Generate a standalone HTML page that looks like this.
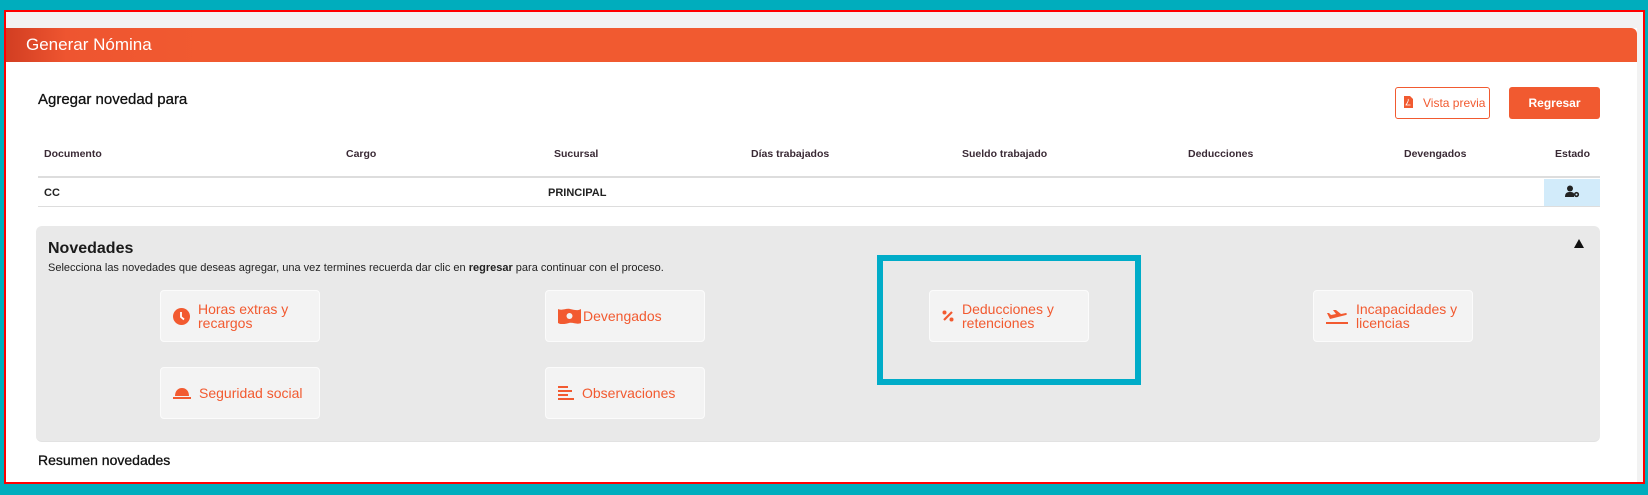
<!DOCTYPE html>
<html><head><meta charset="utf-8"><style>
*{margin:0;padding:0;box-sizing:border-box}
body{width:1648px;height:495px;background:#00adbd;position:relative;overflow:hidden;font-family:"Liberation Sans",sans-serif}
.frame{position:absolute;left:4px;top:10px;width:1641px;height:474px;border:2px solid #ff0000;background:#f2f2f2;overflow:hidden}
.inner{position:absolute;left:0;top:16px;width:1631px;height:460px;background:#fff}
.hdr{position:absolute;left:0;top:0;width:1631px;height:34px;background:linear-gradient(90deg,#d23e22 0,#ee5530 60px,#f15a30 200px,#f15a30);border-top-right-radius:6px;color:#fff;font-size:17px;line-height:34px;padding-left:20px}
.a{position:absolute}
.th{position:absolute;top:148px;font-size:10.5px;font-weight:bold;color:#3a2a35}
.card{position:absolute;width:160px;height:52px;background:#f3f3f3;border:1px solid #fbfbfb;border-radius:4px;color:#f25a30;font-size:14px;line-height:14px;display:flex;align-items:center}
.card svg{flex:none;margin-left:12px;margin-right:8px}
</style></head><body>
<div class="frame"><div class="inner">
<div class="hdr">Generar Nómina</div>
</div></div>
<div class="a" style="left:38px;top:91px;font-size:15px;color:#111;-webkit-text-stroke:0.3px #111">Agregar novedad para</div>
<div class="a" style="left:1395px;top:87px;width:95px;height:32px;border:1px solid #f15a30;border-radius:3px;color:#f15a30;font-size:12px;line-height:30px;padding-left:27px">Vista previa</div>
<svg class="a" style="left:1404px;top:96px" width="9" height="12" viewBox="0 0 9 12"><path d="M0 0h6l3 3v9H0z" fill="#f15a30"/><path d="M2 9c2-3 3-5 2-6M1.5 9h5" stroke="#fff" stroke-width="0.8" fill="none"/></svg>
<div class="a" style="left:1509px;top:87px;width:91px;height:32px;background:#f15a30;border-radius:3px;color:#fff;font-size:12px;font-weight:bold;line-height:32px;text-align:center">Regresar</div>
<div class="th" style="left:44px">Documento</div>
<div class="th" style="left:346px">Cargo</div>
<div class="th" style="left:554px">Sucursal</div>
<div class="th" style="left:751px">Días trabajados</div>
<div class="th" style="left:962px">Sueldo trabajado</div>
<div class="th" style="left:1188px">Deducciones</div>
<div class="th" style="left:1404px">Devengados</div>
<div class="th" style="left:1555px">Estado</div>
<div class="a" style="left:38px;top:176px;width:1562px;height:2px;background:#ddd"></div>
<div class="a" style="left:38px;top:206px;width:1562px;height:1px;background:#ddd"></div>
<div class="a" style="left:1544px;top:179px;width:56px;height:27px;background:#d2ebfa"></div>
<svg class="a" style="left:1565px;top:185px" width="15" height="13" viewBox="0 0 15 13"><circle cx="5" cy="3.5" r="3" fill="#222"/><path d="M0 12c0-4 2-5 5-5s4 1 4 2v3z" fill="#222"/><circle cx="11.5" cy="9.5" r="2.6" fill="#222"/><circle cx="11.5" cy="9.5" r="1" fill="#d2ebfa"/></svg>
<div class="a" style="left:44px;top:187px;font-size:11px;color:#222;font-weight:bold">CC</div>
<div class="a" style="left:548px;top:187px;font-size:11px;color:#222;font-weight:bold">PRINCIPAL</div>
<div class="a" style="left:36px;top:226px;width:1564px;height:216px;background:#e9e9e9;border-radius:6px;border-bottom:1px solid #e2e2e2"></div>
<div class="a" style="left:48px;top:240px;font-size:16px;font-weight:bold;color:#1a1a1a">Novedades</div>
<div class="a" style="left:48px;top:262px;font-size:11px;color:#222">Selecciona las novedades que deseas agregar, una vez termines recuerda dar clic en <b>regresar</b> para continuar con el proceso.</div>
<div class="a" style="left:1574px;top:239px;width:0;height:0;border-left:5px solid transparent;border-right:5px solid transparent;border-bottom:9px solid #111"></div>
<div class="card" style="left:160px;top:290px"><svg width="17" height="17" viewBox="0 0 17 17"><circle cx="8.5" cy="8.5" r="8.5" fill="#f25a30"/><path d="M8 4v5l3 2.5" stroke="#fff" stroke-width="1.8" fill="none"/></svg><span>Horas extras y<br>recargos</span></div>
<div class="card" style="left:545px;top:290px"><svg width="23" height="16" viewBox="0 0 23 16" style="margin-right:2px"><path d="M0 1c4 2 8-1 12 0s8 2 11 0v14c-4 2-8-1-12 0S3 17 0 15z" fill="#f25a30"/><circle cx="11.5" cy="8" r="3" fill="#f3f3f3"/></svg><span>Devengados</span></div>
<div class="card" style="left:929px;top:290px"><svg width="12" height="12" viewBox="0 0 12 12"><circle cx="2.5" cy="2.5" r="2" fill="#f25a30"/><circle cx="9.5" cy="9.5" r="2" fill="#f25a30"/><path d="M10 2L2 10" stroke="#f25a30" stroke-width="2.2"/></svg><span>Deducciones y<br>retenciones</span></div>
<div class="card" style="left:1313px;top:290px"><svg width="22" height="17" viewBox="0 0 22 17"><path d="M1 5l2 0 2 2 5-1-3-4h3l5 4 5-1c1 0 1 2 0 2L4 11z" fill="#f25a30"/><rect x="0" y="14" width="22" height="2" fill="#f25a30"/></svg><span>Incapacidades y<br>licencias</span></div>
<div class="card" style="left:160px;top:367px"><svg width="18" height="14" viewBox="0 0 18 14"><path d="M2 10c0-5 3-8 7-8s7 3 7 8z" fill="#f25a30"/><rect x="0" y="11" width="18" height="2" fill="#f25a30"/></svg><span>Seguridad social</span></div>
<div class="card" style="left:545px;top:367px"><svg width="16" height="16" viewBox="0 0 16 16"><g fill="#f25a30"><rect x="0" y="1" width="10" height="2"/><rect x="0" y="5" width="14" height="2"/><rect x="0" y="9" width="10" height="2"/><rect x="0" y="13" width="16" height="2"/></g></svg><span>Observaciones</span></div>
<div class="a" style="left:877px;top:255px;width:264px;height:130px;border:6px solid #00acc8"></div>
<div class="a" style="left:38px;top:452px;font-size:14px;color:#111;-webkit-text-stroke:0.3px #111">Resumen novedades</div>
</body></html>
